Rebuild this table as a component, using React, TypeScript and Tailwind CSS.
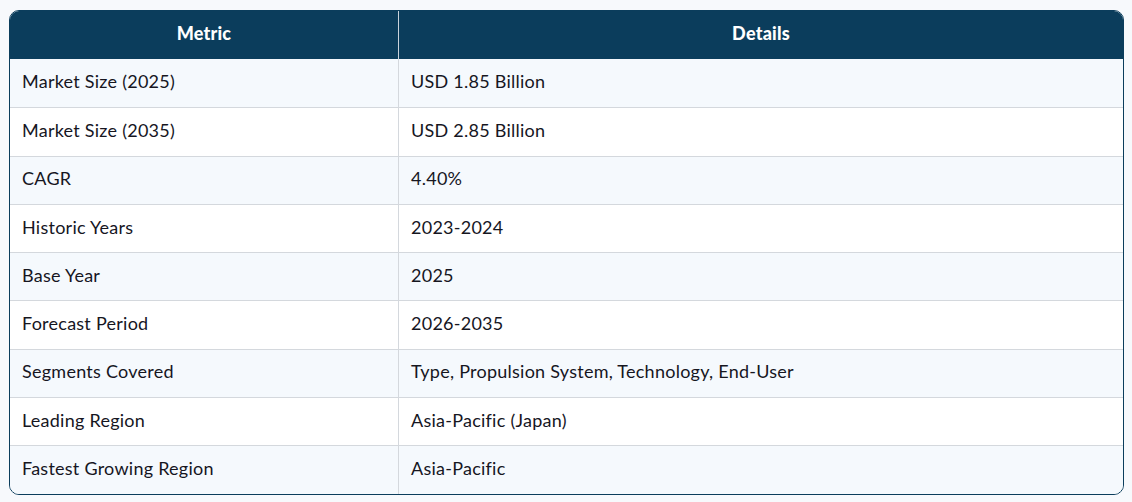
import React from "react";

const rows: [string, string][] = [
  ["Market Size (2025)", "USD 1.85 Billion"],
  ["Market Size (2035)", "USD 2.85 Billion"],
  ["CAGR", "4.40%"],
  ["Historic Years", "2023-2024"],
  ["Base Year", "2025"],
  ["Forecast Period", "2026-2035"],
  ["Segments Covered", "Type, Propulsion System, Technology, End-User"],
  ["Leading Region", "Asia-Pacific (Japan)"],
  ["Fastest Growing Region", "Asia-Pacific"],
];

export default function App() {
  return (
    <div
      className="w-[1132px] h-[502px] bg-[#f7f9fc] pt-[10px] pl-[9px] pr-[8px]"
      style={{ fontFamily: "Lato, 'Noto Sans', sans-serif" }}
    >
      <div className="border border-[#0b3d5c] rounded-[10px] overflow-hidden bg-white">
        <div className="grid grid-cols-[389px_1fr] h-[48px] bg-[#0b3d5c] text-white font-black text-[18px] tracking-[0.2px]">
          <div className="flex items-center justify-center pb-[3px] border-r border-[#c9d3dc]">Metric</div>
          <div className="flex items-center justify-center pb-[3px]">Details</div>
        </div>
        {rows.map(([m, d], i) => (
          <div
            key={m}
            className={
              "grid grid-cols-[389px_1fr] h-[48.3px] text-[18px] text-[#16161f] tracking-[0.25px] " +
              (i % 2 === 0 ? "bg-[#f5f9fd]" : "bg-white") +
              (i > 0 ? " border-t border-[#d4d8dd]" : "")
            }
          >
            <div className="flex items-center pl-[12px] pb-[3px] border-r border-[#d4d8dd]">{m}</div>
            <div className="flex items-center pl-[12px] pb-[3px]">{d}</div>
          </div>
        ))}
      </div>
    </div>
  );
}
